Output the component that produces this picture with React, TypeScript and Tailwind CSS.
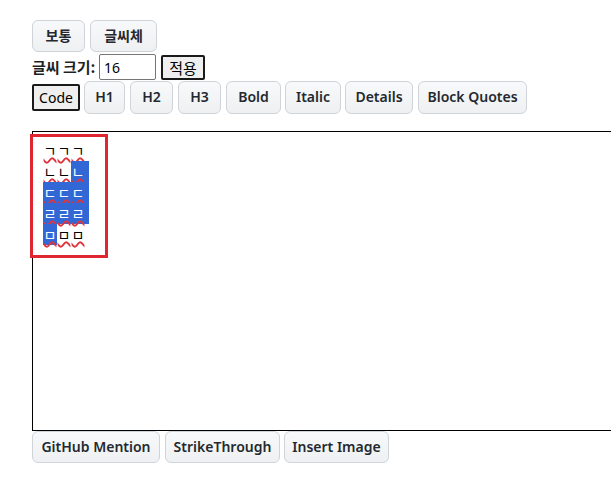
import React from "react";

const Btn = ({ w, children, ml = 0, h = "h-[32px]" }: { w: string; children: React.ReactNode; ml?: number; h?: string }) => (
  <button
    className={`${w} ${h} shrink-0 rounded-[6px] border border-[#cfd4d9] bg-gradient-to-b from-[#f8f9fa] to-[#eef0f2] text-[14px] font-semibold text-[#24292f] leading-[20px]`}
    style={{ marginLeft: ml }}
  >
    {children}
  </button>
);

const Ch = ({ c, sel }: { c: string; sel?: boolean }) => (
  <span
    className={`inline-block w-[14px] h-[21px] leading-[21px] text-center underline decoration-wavy decoration-[#e0343c] underline-offset-[1px] decoration-[1.5px] ${
      sel ? "bg-[#3267d6] text-white" : "text-black"
    }`}
  >
    {c}
  </span>
);

const Tail = ({ sel }: { sel?: boolean }) => (
  <span className={`inline-block w-[4px] h-[21px] ${sel ? "bg-[#3267d6]" : ""}`} />
);

export default function App() {
  const font = "font-['Noto_Sans','Noto_Sans_CJK_KR',sans-serif]";
  return (
    <div className={`w-[611px] min-h-[480px] overflow-hidden bg-white pl-8 pt-5 ${font} text-[14px] text-[#1f1f1f]`}>
      <div className="flex">
        <Btn w="w-[53px]">보통</Btn>
        <Btn w="w-[67px]" ml={5}>글씨체</Btn>
      </div>
      <div className="flex items-end h-[28px]">
        <span className="w-[65px] text-[15px] font-semibold leading-[26px] font-['Noto_Sans_CJK_KR',sans-serif] whitespace-nowrap">글씨 크기:</span>
        <input
          defaultValue="16"
          className="ml-[2px] w-[57px] h-[26px] border border-[#767676] rounded-[2px] px-[4px] text-[14px] text-black outline-none"
        />
        <button className="ml-[5px] w-[44px] h-[25px] mb-0 border-2 border-[#1a1a1a] rounded-[2px] bg-[#efefef] text-[15px] leading-[19px] text-black font-['Noto_Sans_CJK_KR',sans-serif]">
          적용
        </button>
      </div>
      <div className="flex items-center h-[34px]">
        <button className="w-[48px] h-[27px] shrink-0 border-2 border-[#1a1a1a] rounded-[2px] bg-[#efefef] text-[14px] leading-[21px] text-black">
          Code
        </button>
        <Btn w="w-[41px]" ml={4} h="h-[33px]">H1</Btn>
        <Btn w="w-[43px]" ml={5} h="h-[33px]">H2</Btn>
        <Btn w="w-[43px]" ml={5} h="h-[33px]">H3</Btn>
        <Btn w="w-[55px]" ml={5} h="h-[33px]">Bold</Btn>
        <Btn w="w-[56px]" ml={4} h="h-[33px]">Italic</Btn>
        <Btn w="w-[68px]" ml={4} h="h-[33px]">Details</Btn>
        <Btn w="w-[109px]" ml={5} h="h-[33px]">Block Quotes</Btn>
      </div>
      <div className="relative mt-[17px] h-[300px] w-[700px] border border-black pt-[8px] pl-[10px] font-['Noto_Sans_CJK_KR',sans-serif] text-[14px]">
        <div className="flex h-[21px]">
          <Ch c="ㄱ" /><Ch c="ㄱ" /><Ch c="ㄱ" />
        </div>
        <div className="flex h-[21px]">
          <Ch c="ㄴ" /><Ch c="ㄴ" /><Ch c="ㄴ" sel /><Tail sel />
        </div>
        <div className="flex h-[21px]">
          <Ch c="ㄷ" sel /><Ch c="ㄷ" sel /><Ch c="ㄷ" sel /><Tail sel />
        </div>
        <div className="flex h-[21px]">
          <Ch c="ㄹ" sel /><Ch c="ㄹ" sel /><Ch c="ㄹ" sel /><Tail sel />
        </div>
        <div className="flex h-[21px]">
          <Ch c="ㅁ" sel /><Ch c="ㅁ" /><Ch c="ㅁ" />
        </div>
        <div className="absolute left-[-3px] top-[2px] w-[78px] h-[124px] border-[3px] border-[#e02631]" />
      </div>
      <div className="flex">
        <Btn w="w-[128px]">GitHub Mention</Btn>
        <Btn w="w-[115px]" ml={5}>StrikeThrough</Btn>
        <Btn w="w-[105px]" ml={4}>Insert Image</Btn>
      </div>
    </div>
  );
}
